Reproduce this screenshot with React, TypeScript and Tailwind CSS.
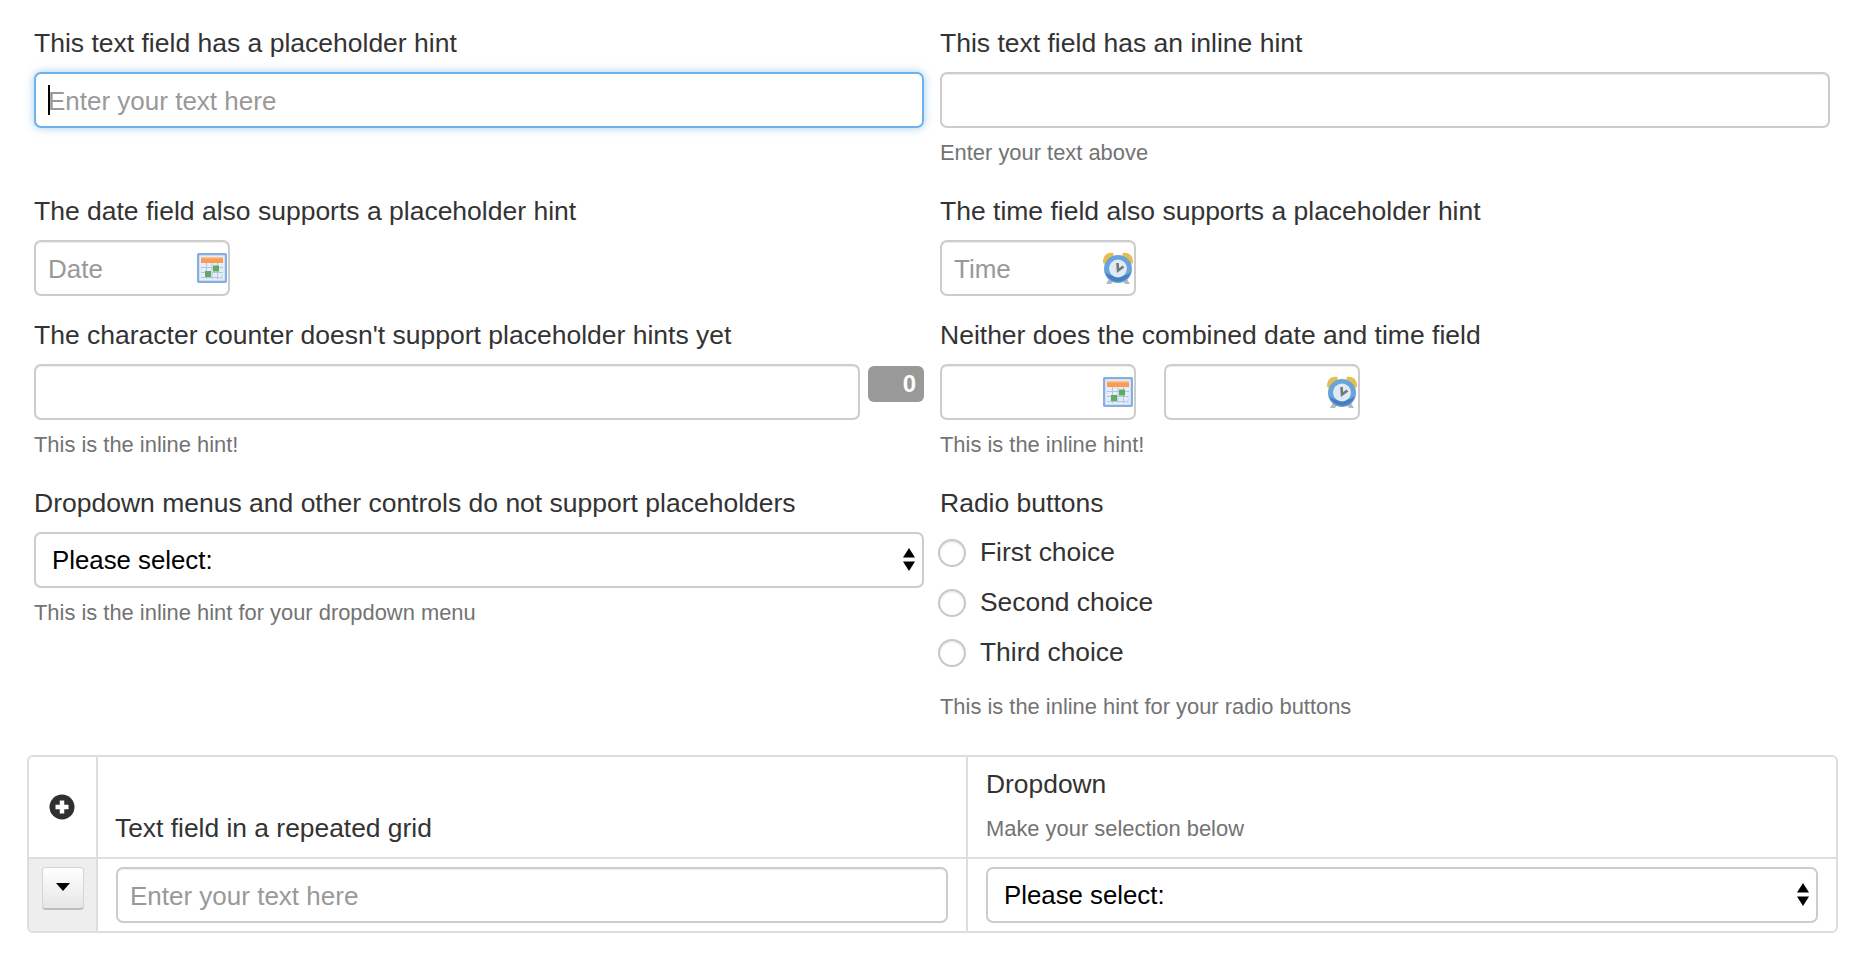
import React from "react";

const font = "font-['Liberation_Sans',Arial,sans-serif]";

function CalendarIcon() {
  return (
    <svg width="30" height="30" viewBox="0 0 30 30" className="block blur-[0.4px]">
      <rect x="1" y="1" width="28" height="28" rx="1.5" fill="#e4eefa" stroke="#86aedf" strokeWidth="2.4" />
      <rect x="4" y="4" width="22" height="6" fill="#fb9a50" />
      <rect x="4" y="4" width="22" height="1.5" fill="#fcc08c" />
      <g stroke="#b3c6de" strokeWidth="1" fill="none">
        <path d="M4 14.5H26M4 19.5H26M4 24.5H26M9.5 10V26M15 10V26M20.5 10V26" />
      </g>
      <rect x="8" y="18" width="6" height="6" fill="#62a965" />
      <rect x="16" y="12.5" width="6" height="6" fill="#62a965" />
      <path d="M21 26 L26 21 V26 Z" fill="#cfdcee" />
    </svg>
  );
}

function ClockIcon() {
  return (
    <svg width="32" height="33" viewBox="0 0 32 33" className="block blur-[0.4px]">
      <path d="M7 27 L4 32 H9 L11 29 Z" fill="#b4babf" />
      <path d="M25 27 L28 32 H23 L21 29 Z" fill="#b4babf" />
      <path d="M1 10 C1 3 6 0 11 1 C12 2 12 3 11 4 L4 11 C3 12 1 12 1 10 Z" fill="#e7bd50" />
      <path d="M31 10 C31 3 26 0 21 1 C20 2 20 3 21 4 L28 11 C29 12 31 12 31 10 Z" fill="#e7bd50" />
      <circle cx="16" cy="17" r="14" fill="#6aa3da" />
      <path d="M3 20 A13.5 13.5 0 0 0 29 20 A16 11 0 0 1 3 20Z" fill="#4480bf" />
      <circle cx="16" cy="16.5" r="9" fill="#dfeaf5" />
      <path d="M15.5 11 L16 18.5 L21.5 14.5" stroke="#74777b" strokeWidth="2.6" fill="none" />
    </svg>
  );
}

function SelectArrows() {
  return (
    <svg width="12" height="23" viewBox="0 0 12 23" className="block">
      <path d="M6 0 L12 9.5 H0 Z" fill="#000" />
      <path d="M6 23 L12 13.5 H0 Z" fill="#000" />
    </svg>
  );
}

const inputCls =
  "block w-full h-[56px] rounded-[7px] border-2 border-[#cccccc] bg-white px-[12px] pt-[2px] text-[26px] text-[#555] placeholder:text-[#999] outline-none shadow-[inset_0_1px_1px_rgba(0,0,0,0.075)]";

function Label({ children }: { children: React.ReactNode }) {
  return <div className="h-[28px] leading-[28px] text-[26.5px] text-[#333] whitespace-nowrap">{children}</div>;
}

function Hint({ children, className = "mt-[11px]" }: { children: React.ReactNode; className?: string }) {
  return <div className={`${className} h-[28px] leading-[28px] text-[21.9px] text-[#737373] whitespace-nowrap`}>{children}</div>;
}

function IconInput({ placeholder, icon }: { placeholder?: string; icon: "date" | "time" }) {
  return (
    <div className="relative w-[196px] h-[56px] shrink-0">
      <input className={inputCls} placeholder={placeholder} />
      <div className={icon === "date" ? "absolute right-[3px] top-[13px]" : "absolute right-[2px] top-[12px]"}>
        {icon === "date" ? <CalendarIcon /> : <ClockIcon />}
      </div>
    </div>
  );
}

function SelectBox() {
  return (
    <div className="relative h-[56px]">
      <select className="block w-full h-[56px] appearance-none rounded-[7px] border-2 border-[#cccccc] bg-white pl-[16px] pr-[40px] text-[25.8px] text-black outline-none">
        <option>Please select:</option>
      </select>
      <div className="absolute right-[9px] top-[16px] pointer-events-none">
        <SelectArrows />
      </div>
    </div>
  );
}

function Radio({ children }: { children: React.ReactNode }) {
  return (
    <div className="flex items-center h-[50px]">
      <span className="block w-[28px] h-[28px] ml-[-2px] rounded-full border-2 border-[#c8c8c8] bg-white shadow-[inset_0_1px_2px_rgba(0,0,0,0.12)]" />
      <span className="ml-[14px] text-[26.4px] text-[#333] -mt-[1px]">{children}</span>
    </div>
  );
}

export default function App() {
  return (
    <div className={`${font} w-[1864px] h-[966px] bg-white overflow-hidden`}>
      <div className="pt-[29px] pl-[34px] w-[1830px]">
        <div className="grid grid-cols-[890px_890px] gap-x-[16px] grid-rows-[168px_124px_168px_auto]">
          <div>
            <Label>This text field has a placeholder hint</Label>
            <div className="mt-[15px] relative">
              <input
                className="block w-full h-[56px] rounded-[7px] border-2 border-[#6db2ec] bg-white px-[12px] pt-[2px] text-[26px] placeholder:text-[#999] outline-none shadow-[0_0_10px_rgba(102,175,233,0.6)]"
                placeholder="Enter your text here"
              />
              <span className="absolute left-[14px] top-[13px] w-[2px] h-[30px] bg-black" />
            </div>
          </div>
          <div>
            <Label>This text field has an inline hint</Label>
            <div className="mt-[15px]">
              <input className={inputCls} />
            </div>
            <Hint>Enter your text above</Hint>
          </div>

          <div>
            <Label>The date field also supports a placeholder hint</Label>
            <div className="mt-[15px]">
              <IconInput placeholder="Date" icon="date" />
            </div>
          </div>
          <div>
            <Label>The time field also supports a placeholder hint</Label>
            <div className="mt-[15px]">
              <IconInput placeholder="Time" icon="time" />
            </div>
          </div>

          <div>
            <Label>The character counter doesn't support placeholder hints yet</Label>
            <div className="mt-[15px] flex justify-between items-start">
              <input className={`${inputCls} !w-[826px]`} />
              <div className="mt-[2px] w-[56px] h-[36px] rounded-[6px] bg-[#999999] text-white font-bold text-[24px] leading-[36px] text-right pr-[8px]">
                0
              </div>
            </div>
            <Hint>This is the inline hint!</Hint>
          </div>
          <div>
            <Label>Neither does the combined date and time field</Label>
            <div className="mt-[15px] flex gap-[28px]">
              <IconInput icon="date" />
              <IconInput icon="time" />
            </div>
            <Hint>This is the inline hint!</Hint>
          </div>

          <div>
            <Label>Dropdown menus and other controls do not support placeholders</Label>
            <div className="mt-[15px]">
              <SelectBox />
            </div>
            <Hint>This is the inline hint for your dropdown menu</Hint>
          </div>
          <div>
            <Label>Radio buttons</Label>
            <div className="pt-[11px]">
              <Radio>First choice</Radio>
              <Radio>Second choice</Radio>
              <Radio>Third choice</Radio>
            </div>
            <Hint className="mt-[15px]">This is the inline hint for your radio buttons</Hint>
          </div>
        </div>
      </div>

      <div className="mt-[34px] ml-[27px] w-[1811px] h-[178px] rounded-[6px] border-2 border-[#dedede] grid grid-cols-[69px_870px_1fr] grid-rows-[102px_1fr] overflow-hidden">
        <div className="border-r-2 border-b-2 border-[#dedede] flex justify-center pt-[37px] pr-[1px]">
          <svg width="26" height="26" viewBox="0 0 26 26" className="block">
            <circle cx="13" cy="13" r="12.5" fill="#2f2f2f" />
            <path d="M13 6.5 V19.5 M6.5 13 H19.5" stroke="#ffffff" strokeWidth="4.5" />
          </svg>
        </div>
        <div className="border-r-2 border-b-2 border-[#dedede] flex items-end pl-[17px] pb-[15px]">
          <span className="text-[26.4px] leading-[28px] text-[#333]">Text field in a repeated grid</span>
        </div>
        <div className="border-b-2 border-[#dedede] pl-[18px] pt-[13px]">
          <div className="text-[26.4px] leading-[28px] text-[#333]">Dropdown</div>
          <div className="mt-[17px] text-[21.9px] leading-[28px] text-[#737373]">Make your selection below</div>
        </div>

        <div className="border-r-2 border-[#dedede] bg-[#eeeeee] flex justify-center pt-[8px]">
          <div className="w-[42px] h-[43px] rounded-[4px] border border-[#d4d4d4] border-b-2 border-b-[#bdbdbd] bg-gradient-to-b from-white to-[#e6e6e6] flex items-center justify-center">
            <svg width="14" height="8" viewBox="0 0 14 8" className="block mb-[2px]">
              <path d="M0 0 H14 L7 8 Z" fill="#000" />
            </svg>
          </div>
        </div>
        <div className="border-r-2 border-[#dedede] pl-[18px] pr-[18px] pt-[8px]">
          <input className={inputCls} placeholder="Enter your text here" />
        </div>
        <div className="pl-[18px] pr-[18px] pt-[8px]">
          <SelectBox />
        </div>
      </div>
    </div>
  );
}
